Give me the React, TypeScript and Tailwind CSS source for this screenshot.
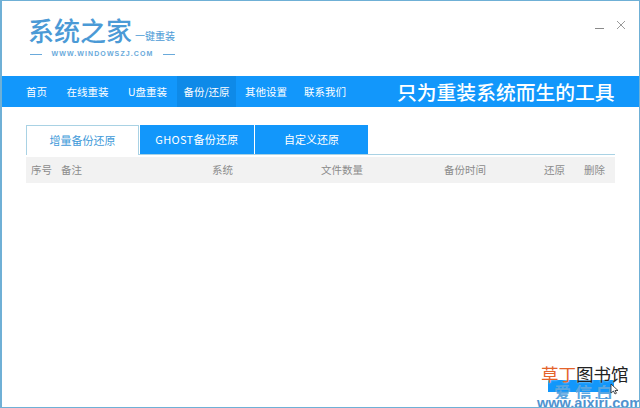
const font = "[font-family:'Noto_Sans_CJK_SC','Liberation_Sans',sans-serif]";

const navItems = [
  { label: "首页", width: "w-[41px]", active: false },
  { label: "在线重装", width: "w-[61px]", active: false },
  { label: "U盘重装", width: "w-[59px]", active: false },
  { label: "备份/还原", width: "w-[59px]", active: true },
  { label: "其他设置", width: "w-[60px]", active: false },
  { label: "联系我们", width: "w-[58px]", active: false },
];

const columns = [
  { label: "序号", width: "w-[30px]" },
  { label: "备注", width: "w-[151px]" },
  { label: "系统", width: "w-[109px]" },
  { label: "文件数量", width: "w-[123px]" },
  { label: "备份时间", width: "w-[100px]" },
  { label: "还原", width: "w-[40px]" },
  { label: "删除", width: "w-[22px]" },
];

const App = () => {
  return (
    <div className={`relative w-[640px] h-[408px] overflow-hidden bg-white border-t border-l-2 border-r border-b border-[#6fb0d6] ${font}`}>
      {/* logo + window buttons */}
      <div className="h-[75px] flex justify-between">
        <div className="pl-[26px] pt-[13px]">
          <div className="flex items-end h-[32px]">
            <span className="text-[26px] leading-[32px] text-[#4b9ad6] font-medium">系统之家</span>
            <span className="text-[10px] leading-[14px] ml-[3px] mb-[3px] text-[#4b9ad6]">一键重装</span>
          </div>
          <div className="flex items-center h-[14px] mt-[1px] text-[#6aaadb]">
            <span className="w-[12px] h-px ml-[2px] bg-[#6aaadb]" />
            <span className="w-[121px] text-center text-[7px] font-bold tracking-[1.1px] [font-family:'Liberation_Sans',sans-serif]">WWW.WINDOWSZJ.COM</span>
            <span className="w-[12px] h-px bg-[#6aaadb]" />
          </div>
        </div>
        <div className="flex items-start gap-[12px] pt-[17px] pr-[13px]">
          <span className="w-[9px] h-px mt-[10px] bg-[#8a8a8a]" />
          <svg width="10" height="10" viewBox="0 0 10 10" className="mt-[2px]">
            <path d="M1 1 9 9M9 1 1 9" stroke="#9a9a9a" strokeWidth="1" fill="none" />
          </svg>
        </div>
      </div>

      {/* nav bar */}
      <div className="h-[31px] bg-[#1297fb] flex items-stretch pl-[14px] text-white">
        {navItems.map((item) => (
          <div
            key={item.label}
            className={`${item.width} flex items-center justify-center text-[10.5px] ${item.active ? "bg-[#0e8ae8]" : ""}`}
          >
            {item.label}
          </div>
        ))}
        <div className="ml-[43px] flex items-center text-[19.8px] font-medium whitespace-nowrap">
          只为重装系统而生的工具
        </div>
      </div>

      {/* tabs */}
      <div className="pt-[18px] pl-[24px] pr-[24px]">
        <div className="flex h-[30px] border-b border-[#a9d2e4] w-[589px]">
          <div className="w-[113px] h-[30px] flex items-center justify-center text-[11px] text-[#3f9ad9] bg-white border-t border-l border-r border-[#a9d2e4]">
            增量备份还原
          </div>
          <div className="w-[114px] ml-px flex items-center justify-center text-[11px] tracking-[0.3px] text-white bg-[#1297fb]">
            GHOST备份还原
          </div>
          <div className="w-[113px] ml-px flex items-center justify-center text-[11px] text-white bg-[#1297fb]">
            自定义还原
          </div>
        </div>

        {/* table header */}
        <div className="mt-[2px] w-[589px] h-[26px] bg-[#f2f2f2] flex items-center pl-[5px] text-[10.5px] text-[#8c8c8c]">
          {columns.map((c) => (
            <div key={c.label} className={`${c.width} shrink-0`}>
              {c.label}
            </div>
          ))}
        </div>
      </div>

      {/* site watermark */}
      <div className="absolute left-[546px] top-[379px] w-[66px] h-[12px] bg-[#1297fb]" />
      <div className="absolute left-[552px] top-[384px] text-[17px] leading-[14px] h-[14px] overflow-hidden font-bold text-[#5ba6e0] tracking-[4px] whitespace-nowrap">爱信白</div>
      <div className="absolute left-[539px] top-[363px] text-[17.5px] leading-[20px] whitespace-nowrap [text-shadow:0_0_2px_#fff]">
        <span className="text-[#e4632a]">草丁</span>
        <span className="text-[#222222]">图书馆</span>
      </div>
      <div className="absolute left-[535px] top-[397px] text-[14.5px] leading-[11px] h-[11px] font-bold text-[#4f93cf] whitespace-nowrap [font-family:'Liberation_Sans',sans-serif]">
        www.aixiri.com
      </div>
      <svg width="10" height="12" viewBox="0 0 10 12" className="absolute left-[608px] top-[382px]">
        <path d="M1 1v9l2.5-2 1.5 3 1.5-.8L5 7.5h3z" fill="#fff" stroke="#222" strokeWidth="0.8" />
      </svg>
    </div>
  );
};

export default App;
